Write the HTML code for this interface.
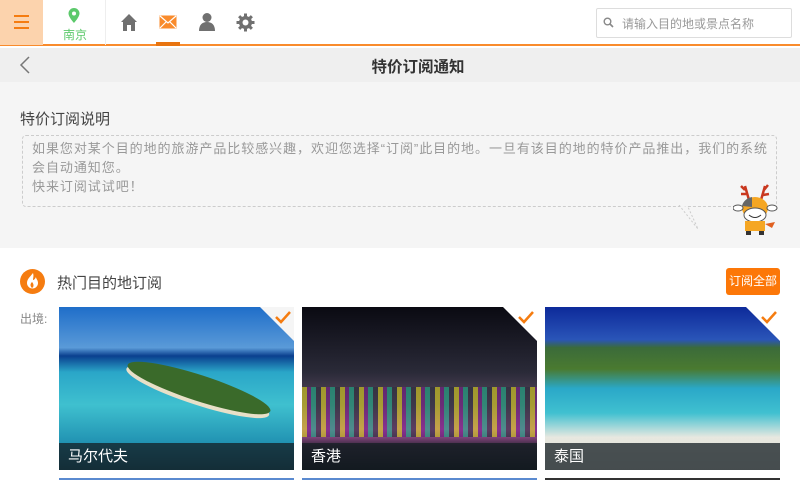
<!DOCTYPE html>
<html><head><meta charset="utf-8"><style>
*{margin:0;padding:0;box-sizing:border-box}
body{width:800px;height:480px;overflow:hidden;background:#fff;font-family:"Liberation Sans","Noto Sans CJK SC",sans-serif;position:relative}
.a{position:absolute}
.img{position:absolute;top:307px;width:235px;height:163px;overflow:hidden}
.cap{position:absolute;left:0;right:0;bottom:0;height:27px;background:rgba(20,30,35,.75);color:#fff;font-size:15px;line-height:27px;padding-left:9px}
.corner{position:absolute;right:0;top:0;width:0;height:0;border-top:34px solid #f5f5f5;border-left:34px solid transparent}
.chk{position:absolute;right:3px;top:4px}
</style></head><body>
<div class="a" style="left:0;top:0;width:800px;height:46px;background:#fff;border-bottom:2px solid #f98b2c"></div>
<div class="a" style="left:0;top:0;width:43px;height:45px;background:#fcd3ad"></div>
<div class="a" style="left:14px;top:15px;width:15px;height:2px;background:#f57c10;box-shadow:0 6px 0 #f57c10,0 12px 0 #f57c10"></div>
<div class="a" style="left:105px;top:0;width:1px;height:45px;background:#eee"></div>
<svg class="a" style="left:66px;top:7px" width="16" height="17" viewBox="0 0 16 17"><path d="M8 1a5.5 5.5 0 0 0-5.5 5.5C2.5 10 8 16 8 16s5.5-6 5.5-9.5A5.5 5.5 0 0 0 8 1z" fill="#5cc96b"/><circle cx="8" cy="6.5" r="2" fill="#fff"/></svg>
<div class="a" style="left:63px;top:26px;font-size:12px;color:#5cc96b">南京</div>
<svg class="a" style="left:120px;top:13px" width="18" height="19" viewBox="0 0 18 19"><path d="M9 1L1 9h2v9h4v-6h4v6h4V9h2z" fill="#707070"/></svg>
<svg class="a" style="left:159px;top:15px" width="18" height="14" viewBox="0 0 18 14"><rect x="0.5" y="0.5" width="17" height="13" fill="#f98b2c"/><path d="M1 1l8 7 8-7M1 13l6-6M17 13l-6-6" stroke="#fff" stroke-width="1.2" fill="none"/></svg>
<div class="a" style="left:156px;top:42px;width:24px;height:4px;background:#e87410"></div>
<svg class="a" style="left:198px;top:12px" width="18" height="20" viewBox="0 0 18 20"><circle cx="9" cy="5.5" r="4.5" fill="#707070"/><path d="M1 19c0-6 3-9 8-9s8 3 8 9z" fill="#707070"/></svg>
<svg class="a" style="left:236px;top:13px" width="19" height="19" viewBox="0 0 19 19"><g fill="#707070"><circle cx="9.5" cy="9.5" r="6.5"/><rect x="8" y="0.5" width="3" height="18"/><rect x="0.5" y="8" width="18" height="3"/><rect x="8" y="0.5" width="3" height="18" transform="rotate(45 9.5 9.5)"/><rect x="8" y="0.5" width="3" height="18" transform="rotate(-45 9.5 9.5)"/></g><circle cx="9.5" cy="9.5" r="3" fill="#fff"/></svg>
<div class="a" style="left:596px;top:8px;width:196px;height:30px;border:1px solid #ddd;border-radius:2px;background:#fff"></div>
<svg class="a" style="left:603px;top:17px" width="11" height="11" viewBox="0 0 11 11"><circle cx="4.5" cy="4.5" r="3.3" stroke="#888" stroke-width="1.4" fill="none"/><path d="M7 7l3 3" stroke="#888" stroke-width="1.6"/></svg>
<div class="a" style="left:622px;top:15px;font-size:12px;color:#999">请输入目的地或景点名称</div>
<div class="a" style="left:0;top:48px;width:800px;height:34px;background:#efefef"></div>
<svg class="a" style="left:19px;top:56px" width="12" height="18" viewBox="0 0 12 18"><path d="M10 1L2 9l8 8" stroke="#777" stroke-width="1.5" fill="none"/></svg>
<div class="a" style="left:0;top:55px;width:836px;text-align:center;font-size:15.5px;font-weight:bold;color:#333">特价订阅通知</div>
<div class="a" style="left:0;top:82px;width:800px;height:166px;background:#f5f5f5"></div>
<div class="a" style="left:20px;top:108px;font-size:15px;color:#444">特价订阅说明</div>
<div class="a" style="left:22px;top:135px;width:755px;height:72px;border:1px dashed #ccc;border-radius:4px"></div>
<div class="a" style="left:32px;top:139px;width:745px;font-size:13px;letter-spacing:0.95px;line-height:19px;color:#999">如果您对某个目的地的旅游产品比较感兴趣，欢迎您选择“订阅”此目的地。一旦有该目的地的特价产品推出，我们的系统会自动通知您。<br>快来订阅试试吧！</div>
<svg class="a" style="left:678px;top:205px" width="22" height="26" viewBox="0 0 22 26"><path d="M1 0l19 24L10 2" stroke="#ccc" stroke-dasharray="2 2" fill="#f5f5f5"/></svg>
<svg class="a" style="left:733px;top:178px" width="50" height="60" viewBox="0 0 50 60"><path d="M16 22L12 8M12 12l-4-4M14 16l-6 0M28 22l4-14M31 12l4-5M30 17l6-1" stroke="#c9381f" stroke-width="2.5" fill="none"/><ellipse cx="22" cy="30" rx="13" ry="11" fill="#f5a623"/><path d="M9 28a13 11 0 0 1 10-9v10z" fill="#666"/><ellipse cx="5" cy="30" rx="5" ry="3" fill="#fff" stroke="#555"/><ellipse cx="39" cy="30" rx="5" ry="3" fill="#fff" stroke="#555"/><ellipse cx="22" cy="37" rx="11" ry="7" fill="#fff" stroke="#555"/><path d="M16 37q6 5 12 0" stroke="#333" fill="none"/><path d="M12 43h20v10H12z" fill="#f5a623"/><rect x="13" y="53" width="5" height="4" fill="#333"/><rect x="26" y="53" width="5" height="4" fill="#333"/><path d="M32 46l10 -2-3 6z" fill="#e06020"/></svg>
<div class="a" style="left:20px;top:269px;width:25px;height:25px;border-radius:50%;background:#f57c10"></div>
<svg class="a" style="left:24px;top:272px" width="17" height="19" viewBox="0 0 17 19"><path d="M9 1C6 5 3 7 3 11a5.5 5.5 0 0 0 11 0c0-3-2-4-2-6-1 2-2 3-3 3C9 6 10 4 9 1z" fill="#fff"/><path d="M8 10c-2 2-2 4 0 6 2-1 2-4 0-6z" fill="#f57c10"/></svg>
<div class="a" style="left:57px;top:272px;font-size:15px;color:#444">热门目的地订阅</div>
<div class="a" style="left:726px;top:268px;width:54px;height:27px;border-radius:3px;background:#fc7708;color:#fff;font-size:12px;line-height:27px;text-align:center">订阅全部</div>
<div class="a" style="left:20px;top:310px;font-size:12px;color:#888">出境:</div>
<div class="img" style="left:59px;background:linear-gradient(#1f6ec9 0%,#5a9ad8 25%,#0a3f8f 30%,#2aa6c8 40%,#3fc0cf 60%,#1f8fb0 85%,#155f75 100%)">
<div class="a" style="left:65px;top:68px;width:150px;height:26px;border-radius:50%;background:#3a6a2a;transform:rotate(18deg);box-shadow:0 4px 0 #e8e0c8"></div>
<div class="corner"></div><svg class="chk" width="16" height="13" viewBox="0 0 16 13"><path d="M1 6l5 5 9-10" stroke="#f57c10" stroke-width="2.5" fill="none"/></svg><div class="cap">马尔代夫</div></div>
<div class="img" style="left:302px;background:linear-gradient(#0a0a12 0%,#2a2a38 40%,#5a4a60 60%,#c05ab0 75%,#3a2a40 85%,#101018 100%)">
<div class="a" style="left:0;top:80px;width:235px;height:50px;background:repeating-linear-gradient(90deg,#c8c020 0 5px,#702080 5px 9px,#20a080 9px 14px,#303040 14px 19px);opacity:.7"></div>
<div class="corner" style="border-top-color:#fff"></div><svg class="chk" width="16" height="13" viewBox="0 0 16 13"><path d="M1 6l5 5 9-10" stroke="#f57c10" stroke-width="2.5" fill="none"/></svg><div class="cap">香港</div></div>
<div class="img" style="left:545px;background:linear-gradient(#0d2a9a 0%,#2a55b8 20%,#3b6b3a 25%,#4a7a30 38%,#2aa8c8 50%,#40c0d0 65%,#e8e8e0 80%,#d8d8d0 100%)">
<div class="corner" style="border-top-color:#fff"></div><svg class="chk" width="16" height="13" viewBox="0 0 16 13"><path d="M1 6l5 5 9-10" stroke="#f57c10" stroke-width="2.5" fill="none"/></svg><div class="cap">泰国</div></div>
<div class="a" style="left:59px;top:478px;width:235px;height:2px;background:#5a8ad0"></div>
<div class="a" style="left:302px;top:478px;width:235px;height:2px;background:#5a8ad0"></div>
<div class="a" style="left:545px;top:478px;width:235px;height:2px;background:#333"></div>
</body></html>
